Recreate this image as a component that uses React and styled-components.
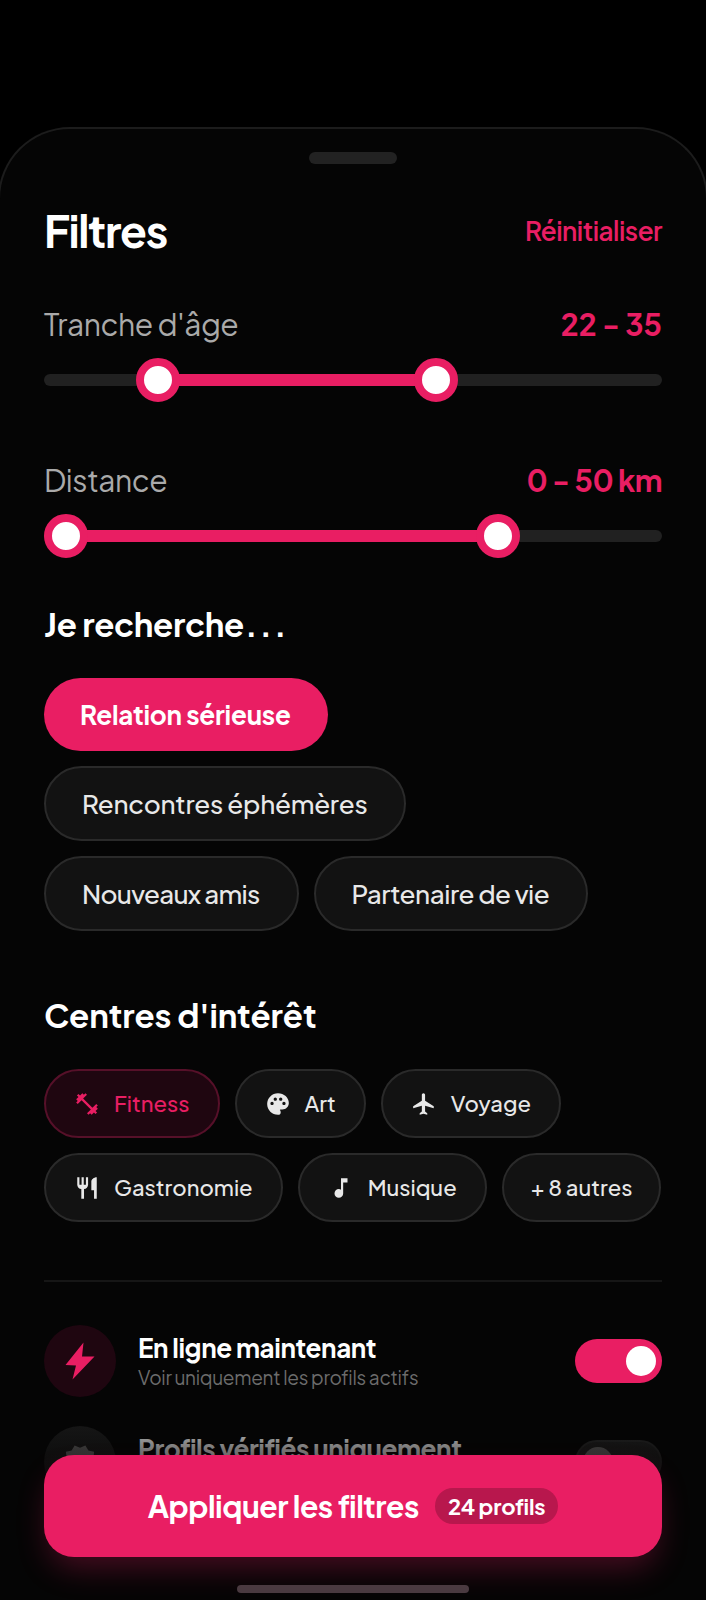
import React from "react";
import styled, { createGlobalStyle } from "styled-components";
import {
  MdFitnessCenter,
  MdPalette,
  MdFlight,
  MdRestaurant,
  MdMusicNote,
  MdVerified
} from "react-icons/md";

const PINK = "#e91e63";

const GlobalStyle = createGlobalStyle`
  html, body {
    margin: 0;
    padding: 0;
    background: #000;
  }
  * {
    box-sizing: border-box;
  }
`;

const BoltIcon = () => (
  <svg width="30" height="38" viewBox="0 0 30 38" fill={PINK}>
    <path d="M18.5 .5 .5 23l10.5.5L7.5 37.5 29.5 14.5H17z" />
  </svg>
);

const RangeSlider = ({ from, to }) => (
  <Track>
    <Fill style={{ left: from, width: to - from }} />
    <Thumb style={{ left: from }} />
    <Thumb style={{ left: to }} />
  </Track>
);

const Toggle = ({ on }) => (
  <ToggleTrack $on={on}>
    <ToggleKnob $on={on} />
  </ToggleTrack>
);

const App = () => {
  return (
    <Page>
      <GlobalStyle />
      <Sheet>
        <Handle />
        <Header>
          <Title>Filtres</Title>
          <Reset>Réinitialiser</Reset>
        </Header>

        <RangeHead>
          <RangeLabel>Tranche d'âge</RangeLabel>
          <RangeValue>22 - 35</RangeValue>
        </RangeHead>
        <RangeSlider from={114} to={392} />

        <RangeHead $second>
          <RangeLabel>Distance</RangeLabel>
          <RangeValue $track="-0.5px">0 - 50 km</RangeValue>
        </RangeHead>
        <RangeSlider from={22} to={454} />

        <SectionTitle>
          Je recherche<Dots>...</Dots>
        </SectionTitle>
        <GoalList>
          <GoalRow>
            <GoalChip $active $track="-0.2px">Relation sérieuse</GoalChip>
          </GoalRow>
          <GoalRow>
            <GoalChip>Rencontres éphémères</GoalChip>
          </GoalRow>
          <GoalRow>
            <GoalChip $track="-0.7px">Nouveaux amis</GoalChip>
            <GoalChip $track="-0.45px">Partenaire de vie</GoalChip>
          </GoalRow>
        </GoalList>

        <InterestTitle>Centres d'intérêt</InterestTitle>
        <InterestList>
          <InterestChip $active>
            <MdFitnessCenter size={26} />
            Fitness
          </InterestChip>
          <InterestChip>
            <MdPalette size={26} />
            Art
          </InterestChip>
          <InterestChip>
            <MdFlight size={26} />
            Voyage
          </InterestChip>
          <InterestChip>
            <MdRestaurant size={26} />
            Gastronomie
          </InterestChip>
          <InterestChip>
            <MdMusicNote size={26} />
            Musique
          </InterestChip>
          <MoreChip>+ 8 autres</MoreChip>
        </InterestList>

        <Divider />

        <Options>
          <OptionRow>
            <OptionIcon $active>
              <BoltIcon />
            </OptionIcon>
            <OptionText>
              <OptionTitle>En ligne maintenant</OptionTitle>
              <OptionHint>Voir uniquement les profils actifs</OptionHint>
            </OptionText>
            <Toggle on />
          </OptionRow>
          <OptionRow>
            <OptionIcon>
              <MdVerified size={38} color="#6b6b6b" />
            </OptionIcon>
            <OptionText>
              <OptionTitle>Profils vérifiés uniquement</OptionTitle>
              <OptionHint>Badge de vérification requis</OptionHint>
            </OptionText>
            <Toggle />
          </OptionRow>
        </Options>
      </Sheet>

      <Footer>
        <ApplyButton>
          Appliquer les filtres
          <CountBadge>24 profils</CountBadge>
        </ApplyButton>
      </Footer>
      <HomeBar />
    </Page>
  );
};

const Page = styled.div`
  position: relative;
  width: 706px;
  height: 1600px;
  padding-top: 127px;
  overflow: hidden;
  background: #000;
  font-family: "Plus Jakarta Sans", Inter, "Noto Sans", sans-serif;
`;

const Sheet = styled.div`
  height: 1473px;
  padding: 23px 44px 0;
  margin: 0 -2px;
  background: #050505;
  border-top: 2px solid #1c1c1c;
  border-left: 2px solid #1c1c1c;
  border-right: 2px solid #1c1c1c;
  border-radius: 72px 72px 0 0;
`;

const Handle = styled.div`
  width: 88px;
  height: 12px;
  margin: 0 auto;
  background: #222;
  border-radius: 6px;
`;

const Header = styled.div`
  display: flex;
  align-items: center;
  justify-content: space-between;
  margin-top: 39px;
`;

const Title = styled.h1`
  margin: 0;
  font-size: 44px;
  line-height: 54px;
  font-weight: 700;
  letter-spacing: -1.3px;
  color: #fff;
`;

const Reset = styled.span`
  font-size: 26px;
  font-weight: 600;
  letter-spacing: -0.5px;
  color: ${PINK};
`;

const RangeHead = styled.div`
  display: flex;
  align-items: center;
  justify-content: space-between;
  height: 40px;
  margin-top: ${(p) => (p.$second ? "74px" : "47px")};
`;

const RangeLabel = styled.span`
  font-size: 30px;
  font-weight: 400;
  letter-spacing: -0.4px;
  color: #aaa;
`;

const RangeValue = styled.span`
  font-size: 30px;
  font-weight: 700;
  letter-spacing: ${(p) => p.$track || "0"};
  color: ${PINK};
`;

const Track = styled.div`
  position: relative;
  height: 12px;
  margin-top: 30px;
  background: #212121;
  border-radius: 6px;
`;

const Fill = styled.div`
  position: absolute;
  top: 0;
  height: 12px;
  background: ${PINK};
  border-radius: 6px;
`;

const Thumb = styled.div`
  position: absolute;
  top: -16px;
  width: 44px;
  height: 44px;
  margin-left: -22px;
  background: #fff;
  border: 8px solid ${PINK};
  border-radius: 50%;
`;

const SectionTitle = styled.h2`
  margin: 62px 0 0;
  font-size: 33px;
  line-height: 40px;
  font-weight: 700;
  letter-spacing: -0.3px;
  color: #fff;
`;

const Dots = styled.span`
  margin-left: 1px;
  letter-spacing: 2px;
`;

const GoalList = styled.div`
  display: flex;
  flex-direction: column;
  gap: 15px;
  margin-top: 34px;
`;

const GoalRow = styled.div`
  display: flex;
  gap: 15px;
`;

const GoalChip = styled.div`
  display: flex;
  align-items: center;
  height: ${(p) => (p.$active ? "73px" : "75px")};
  padding: 0 37px 0 36px;
  font-size: 26px;
  font-weight: ${(p) => (p.$active ? 700 : 500)};
  letter-spacing: ${(p) => p.$track || "-0.25px"};
  color: ${(p) => (p.$active ? "#fff" : "#e8e8e8")};
  background: ${(p) => (p.$active ? PINK : "#121212")};
  border: ${(p) => (p.$active ? "none" : "2px solid #2a2a2a")};
  border-radius: 38px;
`;

const InterestTitle = styled(SectionTitle)`
  margin-top: 64px;
  letter-spacing: -0.1px;
`;

const InterestList = styled.div`
  display: flex;
  flex-wrap: wrap;
  gap: 15px;
  margin-top: 34px;
`;

const InterestChip = styled.div`
  display: flex;
  align-items: center;
  gap: 14px;
  height: 69px;
  padding: 0 28px 2px;
  font-size: 22px;
  font-weight: 500;
  color: ${(p) => (p.$active ? PINK : "#e8e8e8")};
  background: ${(p) => (p.$active ? "#1f0610" : "#121212")};
  border: 2px solid ${(p) => (p.$active ? "#561029" : "#2a2a2a")};
  border-radius: 35px;

  svg {
    margin-top: 2px;
  }
`;

const MoreChip = styled(InterestChip)`
  padding: 0 27px 2px;
`;

const Divider = styled.div`
  height: 2px;
  margin-top: 58px;
  background: #161616;
`;

const Options = styled.div`
  display: flex;
  flex-direction: column;
  gap: 29px;
  margin-top: 43px;
`;

const OptionRow = styled.div`
  display: flex;
  align-items: center;
  height: 72px;
`;

const OptionIcon = styled.div`
  flex: none;
  display: flex;
  align-items: center;
  justify-content: center;
  width: 72px;
  height: 72px;
  border-radius: 50%;
  background: ${(p) => (p.$active ? "#1f0610" : "#1c1c1c")};
`;

const OptionText = styled.div`
  flex: 1;
  margin-left: 22px;
`;

const OptionTitle = styled.div`
  font-size: 26px;
  line-height: 32px;
  font-weight: 700;
  letter-spacing: -0.4px;
  color: #fff;
`;

const OptionHint = styled.div`
  font-size: 19px;
  line-height: 26px;
  letter-spacing: -0.28px;
  color: #6c6c6c;
`;

const ToggleTrack = styled.div`
  flex: none;
  display: flex;
  align-items: center;
  justify-content: ${(p) => (p.$on ? "flex-end" : "flex-start")};
  width: 87px;
  height: 44px;
  padding: 0 6px;
  background: ${(p) => (p.$on ? PINK : "#212121")};
  border: ${(p) => (p.$on ? "none" : "2px solid #2a2a2a")};
  border-radius: 22px;
`;

const ToggleKnob = styled.div`
  width: 30px;
  height: 30px;
  background: ${(p) => (p.$on ? "#fff" : "#6b6b6b")};
  border-radius: 50%;
`;

const Footer = styled.div`
  position: absolute;
  left: 0;
  right: 0;
  bottom: 0;
  height: 200px;
  padding: 55px 44px 0;
  background: linear-gradient(
    to bottom,
    rgba(5, 5, 5, 0) 0%,
    rgba(5, 5, 5, 0.55) 25%,
    #050505 60%
  );
`;

const ApplyButton = styled.div`
  display: flex;
  align-items: center;
  justify-content: center;
  gap: 16px;
  height: 102px;
  font-size: 30px;
  font-weight: 700;
  letter-spacing: -0.45px;
  color: #fff;
  background: ${PINK};
  border-radius: 30px;
  box-shadow: 0 16px 32px -6px rgba(233, 30, 99, 0.3);
`;

const CountBadge = styled.span`
  display: flex;
  align-items: center;
  height: 36px;
  padding: 0 13px;
  font-size: 22px;
  font-weight: 700;
  letter-spacing: -0.2px;
  background: #b8174d;
  border-radius: 18px;
`;

const HomeBar = styled.div`
  position: absolute;
  left: 237px;
  bottom: 7px;
  width: 232px;
  height: 8px;
  background: #4a3a40;
  border-radius: 4px;
`;

export default App;
